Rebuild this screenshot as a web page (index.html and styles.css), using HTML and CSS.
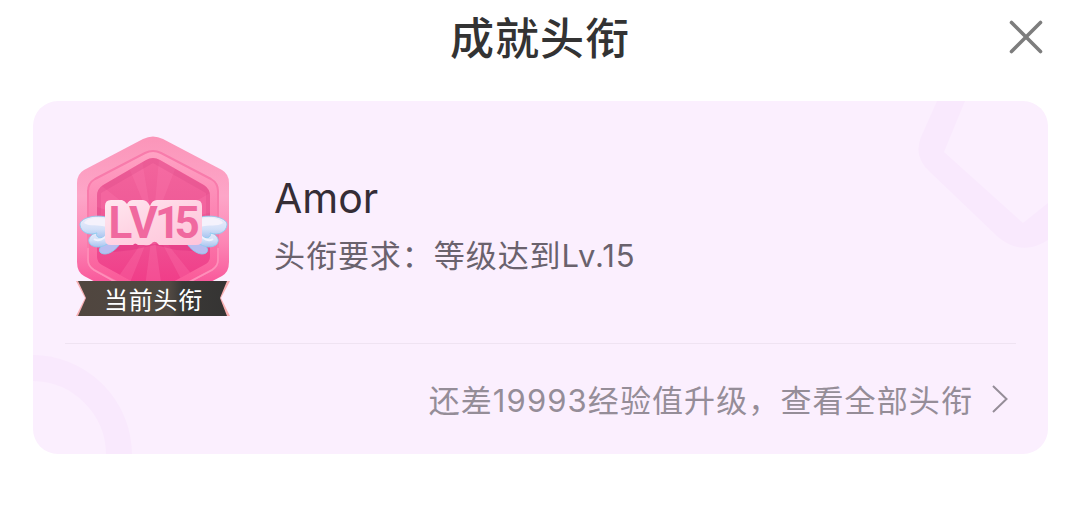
FILE: index.html
```html
<!DOCTYPE html>
<html lang="zh-CN">
<head>
  <meta charset="UTF-8">
  <meta name="viewport" content="width=device-width, initial-scale=1.0">
  <title>成就头衔</title>
  <link rel="stylesheet" href="styles.css">
</head>
<body>
  <header class="header">
    <h1 class="title">成就头衔</h1>
    <button class="close-btn" aria-label="关闭">
      <svg width="34" height="34" viewBox="0 0 34 34">
        <path d="M2.5 2.5L31.5 31.5M31.5 2.5L2.5 31.5" fill="none" stroke="#7d7d7d" stroke-width="3.6" stroke-linecap="round"/>
      </svg>
    </button>
  </header>

  <main class="card">
    <!-- Background shapes -->
    <svg class="card-bg" width="1015" height="353" viewBox="0 0 1015 353">
      <path d="M904 0L888 36Q880 56 897 71L965 136Q989 156 1015 139V102L990 122L911 51L932 0Z" fill="#f9e9fd"/>
      <circle cx="-1" cy="354" r="87" fill="none" stroke="#f9e9fd" stroke-width="26"/>
    </svg>

    <section class="honor">
      <div class="badge">
        <svg width="155" height="181" viewBox="0 0 155 181">
          <defs>
            <linearGradient id="outer" x1="0" y1="0" x2="0" y2="1">
              <stop offset="0" stop-color="#fb95b9"/>
              <stop offset="0.35" stop-color="#fda6c8"/>
              <stop offset="0.62" stop-color="#fc86b5"/>
              <stop offset="1" stop-color="#f73d8b"/>
            </linearGradient>
            <linearGradient id="rim" x1="0" y1="0" x2="0" y2="1">
              <stop offset="0" stop-color="#ffa3c4"/>
              <stop offset="0.55" stop-color="#fb7aad"/>
              <stop offset="1" stop-color="#fa4f92"/>
            </linearGradient>
            <linearGradient id="inner" x1="0" y1="0" x2="0" y2="1">
              <stop offset="0" stop-color="#f4699e"/>
              <stop offset="0.5" stop-color="#ee5796"/>
              <stop offset="1" stop-color="#f22c80"/>
            </linearGradient>
            <linearGradient id="plate" x1="0" y1="0" x2="1" y2="1">
              <stop offset="0" stop-color="#ffe8f0"/>
              <stop offset="0.5" stop-color="#ffd3e3"/>
              <stop offset="1" stop-color="#ffc4da"/>
            </linearGradient>
            <linearGradient id="wing" x1="0" y1="0" x2="0" y2="1">
              <stop offset="0" stop-color="#f0eefb"/>
              <stop offset="0.6" stop-color="#d3e0f8"/>
              <stop offset="1" stop-color="#a9c3ef"/>
            </linearGradient>
            <linearGradient id="ribbon" x1="0" y1="0" x2="1" y2="0">
              <stop offset="0" stop-color="#50463f"/>
              <stop offset="0.62" stop-color="#504842"/>
              <stop offset="0.7" stop-color="#3a3836"/>
              <stop offset="1" stop-color="#353433"/>
            </linearGradient>
            <clipPath id="innerClip">
              <path d="M70 24Q77 20 84 24L128 49Q134 53 134 60V121Q134 126 128 129L84 153Q77 157 70 153L26 129Q21 126 21 121V60Q21 53 27 49Z"/>
            </clipPath>
          </defs>

          <path d="M67 3Q77 -2 87 3L146 34Q153 38 153 47V126Q153 136 146 140L87 171H67L8 140Q1 136 1 126V47Q1 38 8 34Z" fill="url(#outer)"/>
          <path d="M69 17Q77 13 85 17L135 43Q142 47 142 55V124Q142 130 136 134L85 161Q77 165 69 161L18 134Q12 130 12 124V55Q12 47 19 43Z" fill="url(#rim)" stroke="#f87bab" stroke-width="2"/>
          <g clip-path="url(#innerClip)">
            <path d="M0 0H155V181H0Z" fill="url(#inner)"/>
            <path d="M77 90L40 0H62ZM77 90L85 0H112ZM77 90L0 64V30ZM77 90L155 45V72ZM77 90L65 181H90ZM77 90L15 181H40ZM77 90L125 181H150Z" fill="#ff80b5" opacity="0.25"/>
            <path d="M77 20L134 53V90H130V57L77 27L25 57V90H21V53Z" fill="#d84384" opacity="0.25"/>
          </g>
          <path d="M142 112V124Q142 130 136 134L100 153M12 112V124Q12 130 18 134L52 153" fill="none" stroke="#ff8fba" stroke-width="1.6"/>
          <path d="M32 108H123L116 115L100 114L79 109L56 114L38 116Z" fill="#d9277b" opacity="0.35"/>

          <!-- Wings -->
          <g id="wingLeft" fill="url(#wing)" stroke="#8ccdf0" stroke-width="0.9">
            <path d="M44 108C38 116 30 120 25 117C21 114 25 109 32 104Z" fill="#b9bdf0"/>
            <path d="M36 98C36 109 23 114 15 109C9 103 16 97 26 94Z"/>
            <path d="M34 82C18 77 3 83 4 89C5 96 12 100 21 97C18 103 30 104 36 97Z"/>
            <path d="M30 83C20 80 10 83 8 87C14 91 22 88 31 91Z" fill="#f5f2fc" stroke="none"/>
            <path d="M18 103C22 106 28 103 32 98" fill="none" stroke="#f0f2fd" stroke-width="2"/>
          </g>
          <use href="#wingLeft" transform="translate(155 0) scale(-1 1)"/>

          <!-- Level -->
          <path d="M29 70Q29 64 35 64H46Q49 65 51 68Q53 64 57 64H67Q71 64 74 70Q76 64 81 64H120Q126 64 126 70V104Q126 109 120 109H83Q79 103 75 108Q73 110 68 109H62Q59 106 57 109H35Q29 109 29 103Z" fill="url(#plate)"/>
          <text class="level" x="32.5 53 79 98.5" y="102">LV15</text>

          <!-- Ribbon -->
          <path d="M0 145L9 162L0 180H5L15 162L5 145ZM154 145L145 162L154 180H149L139 162L149 145Z" fill="#f8afb2"/>
          <path d="M2 145H151L144 162L151 180H2L10 162Z" fill="url(#ribbon)"/>
        </svg>
        <span class="badge-label">当前头衔</span>
      </div>
      <div class="info">
        <h2 class="name">Amor</h2>
        <p class="require">头衔要求：等级达到Lv.15</p>
      </div>
    </section>

    <a class="more">
      <span>还差19993经验值升级，查看全部头衔</span>
      <svg width="18" height="30" viewBox="0 0 18 30">
        <path d="M2 2L15.5 15L2 28" fill="none" stroke="#958d98" stroke-width="2"/>
      </svg>
    </a>
  </main>
</body>
</html>
```

FILE: styles.css
```css
body {
  margin: 0;
  background: #fff;
  font-family: Inter, "Noto Sans CJK SC", sans-serif;
}

.header {
  display: flex;
  justify-content: space-between;
  align-items: center;
  height: 74px;
  padding: 0 37px;
}

/* balances the close button so the title stays centered */
.header::before {
  content: "";
  width: 34px;
}

.title {
  margin: 0;
  padding-bottom: 3px;
  font-family: "Noto Sans CJK SC", sans-serif;
  font-size: 44px;
  font-weight: 500;
  letter-spacing: 1px;
  line-height: 70px;
  color: #333;
}

.close-btn {
  width: 34px;
  height: 34px;
  padding: 0;
  border: none;
  background: none;
  cursor: pointer;
}

.close-btn svg {
  display: block;
}

.card {
  position: relative;
  box-sizing: border-box;
  width: 1015px;
  height: 353px;
  margin: 27px 0 0 33px;
  padding: 0 32px;
  border-radius: 25px;
  background: #fbeffe;
  overflow: hidden;
}

/* decoration under the card content */
.card-bg {
  position: absolute;
  top: 0;
  left: 0;
}

.honor {
  position: relative;
  display: flex;
  box-sizing: border-box;
  height: 243px;
  padding: 35px 0 0 11px;
  border-bottom: 1px solid #efe3f2;
}

.badge {
  position: relative;
  width: 155px;
  height: 181px;
}

.badge svg {
  display: block;
}

.level {
  font-family: Roboto, sans-serif;
  font-size: 44px;
  font-weight: 700;
  fill: #f0699f;
}

.badge-label {
  position: absolute;
  left: 0;
  right: 0;
  bottom: 1px;
  font-family: "Noto Sans CJK SC", sans-serif;
  font-size: 24px;
  letter-spacing: 0.8px;
  line-height: 35px;
  text-align: center;
  color: #fff;
}

.info {
  margin-left: 43px;
  padding-top: 35px;
}

.name {
  margin: 0;
  font-size: 41px;
  font-weight: 400;
  line-height: 54px;
  color: #352d36;
}

.require {
  margin: 10px 0 0;
  font-size: 31px;
  letter-spacing: 0.95px;
  line-height: 42px;
  color: #6a626d;
}

.more {
  position: relative;
  display: flex;
  justify-content: flex-end;
  align-items: center;
  gap: 18px;
  height: 110px;
  padding-right: 7px;
  font-size: 31px;
  letter-spacing: 1.1px;
  color: #958d98;
}

.more span {
  padding-bottom: 2px;
}
```
